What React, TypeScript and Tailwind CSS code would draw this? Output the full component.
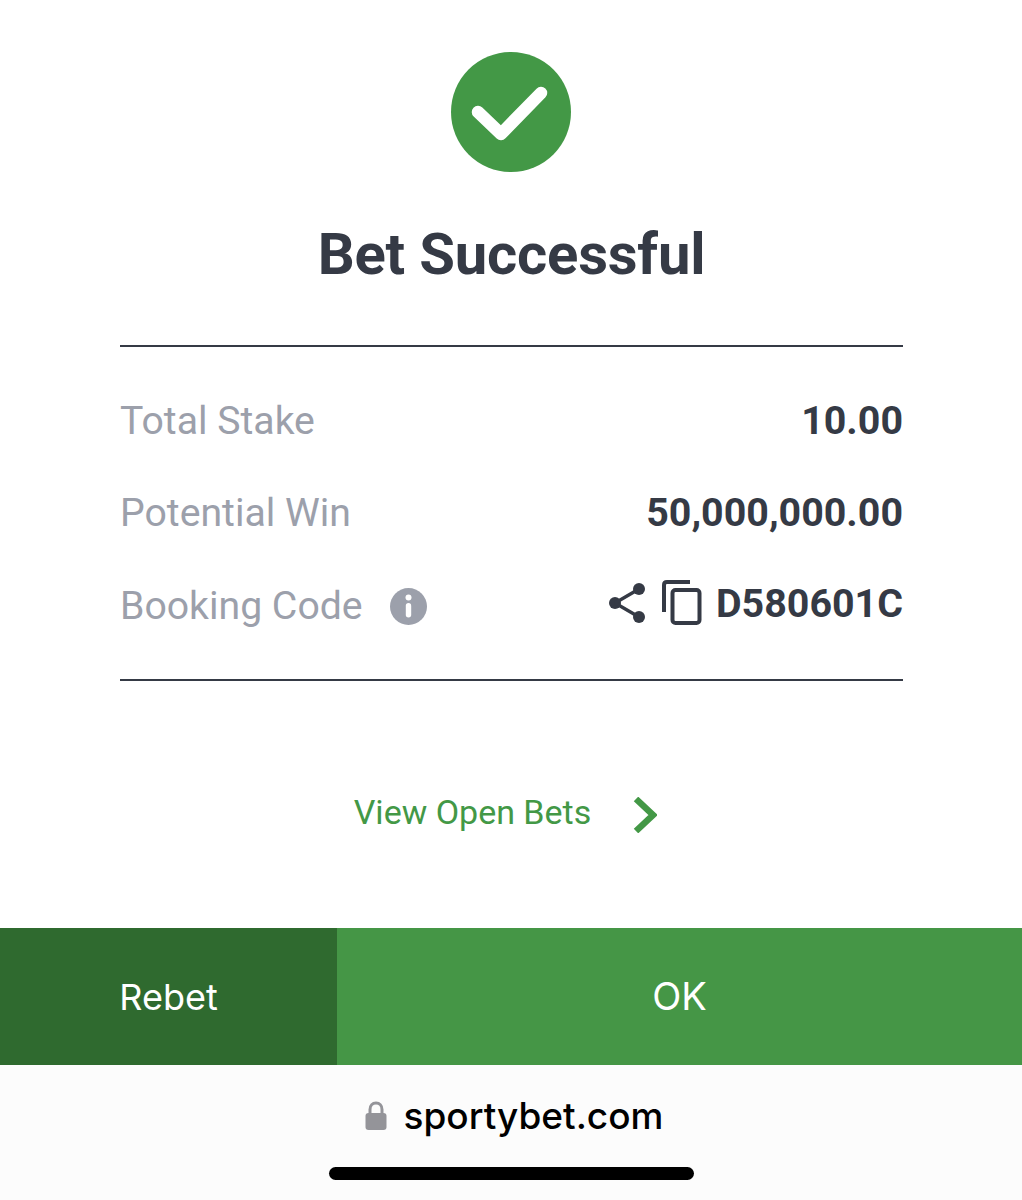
export default function App() {
  return (
    <div className="w-[1022px] h-[1200px] bg-white flex flex-col font-['Roboto',sans-serif]">
      <div className="h-[928px] pl-[120px] pr-[119px] flex flex-col">
        <div className="pt-[52px] flex justify-center">
          <svg width="121" height="121" viewBox="0 0 121 121">
            <circle cx="60" cy="60" r="60" fill="#439846" />
            <path d="M27 60 L50 82 L90 41" fill="none" stroke="#fff" strokeWidth="12.5" strokeLinecap="round" strokeLinejoin="round" />
          </svg>
        </div>
        <h1 className="mt-[49px] text-center text-[58px] leading-[64px] font-bold text-[#353a45] tracking-[-0.2px]">Bet Successful</h1>
        <div className="mt-[59px] h-[2px] bg-[#353a45]" />
        <div className="h-[332px] flex flex-col">
          <div className="mt-[50px] flex items-center justify-between h-[48px]">
            <span className="text-[39.2px] text-[#9ca0ab]">Total Stake</span>
            <span className="text-[39.4px] font-bold text-[#353a45]">10.00</span>
          </div>
          <div className="mt-[44px] flex items-center justify-between h-[48px]">
            <span className="text-[39.2px] text-[#9ca0ab]">Potential Win</span>
            <span className="text-[39.4px] font-bold text-[#353a45]">50,000,000.00</span>
          </div>
          <div className="mt-[45px] flex items-center justify-between h-[48px]">
            <div className="flex items-center gap-[27px]">
              <span className="text-[39.2px] text-[#9ca0ab]">Booking Code</span>
              <svg width="37" height="37" viewBox="0 0 37 37">
                <circle cx="18.5" cy="18.5" r="18.5" fill="#9ca0ab" />
                <circle cx="18.5" cy="9.5" r="3" fill="#fff" />
                <rect x="15.8" y="15" width="5.4" height="14.5" rx="2.7" fill="#fff" />
              </svg>
            </div>
            <div className="flex items-center -mt-[4px]">
              <svg width="38" height="40" viewBox="0 0 38 40" className="text-[#353a45] -mt-[3px]">
                <circle cx="7" cy="20" r="6" fill="currentColor" />
                <circle cx="31" cy="6" r="6" fill="currentColor" />
                <circle cx="31" cy="34" r="6" fill="currentColor" />
                <path d="M7 20 L31 6 M7 20 L31 34" stroke="currentColor" strokeWidth="3.4" />
              </svg>
              <svg width="40" height="46" viewBox="0 0 40 46" fill="none" stroke="#353a45" strokeWidth="4" className="ml-[16px] -mt-[2px]">
                <path d="M2 32 V5 Q2 2 5 2 H28" />
                <rect x="10.5" y="10" width="27" height="33" rx="3" />
              </svg>
              <span className="ml-[14px] text-[39.4px] font-bold text-[#353a45]">D580601C</span>
            </div>
          </div>
        </div>
        <div className="h-[2px] bg-[#353a45]" />
        <div className="mt-[106px] flex justify-center items-center pr-[12px]">
          <span className="text-[34px] text-[#439846]">View Open Bets</span>
          <svg width="24" height="36" viewBox="0 0 24 36" className="ml-[42px] mt-[5px]">
            <path d="M3 2 L20 18 L3 34" fill="none" stroke="#439846" strokeWidth="6.5" />
          </svg>
        </div>
      </div>
      <div className="h-[137px] flex text-white text-[38px] font-['Inter',sans-serif]">
        <div className="w-[337px] bg-[#2f6a2f] flex items-center justify-center text-[36px]">Rebet</div>
        <div className="flex-1 bg-[#459646] flex items-center justify-center">OK</div>
      </div>
      <div className="flex-1 bg-[#fcfcfc] flex flex-col items-center">
        <div className="mt-[29px] ml-[6px] flex items-center gap-[17px]">
          <svg width="22" height="30" viewBox="0 0 22 30">
            <path d="M5 14 V8.5 C5 4.5 7.5 2 11 2 C14.5 2 17 4.5 17 8.5 V14" fill="none" stroke="#949499" strokeWidth="3" />
            <rect x="0.5" y="12" width="21" height="17" rx="3" fill="#949499" />
          </svg>
          <span className="text-[37px] leading-[44px] font-medium text-black font-['Inter',sans-serif]">sportybet.com</span>
        </div>
        <div className="mt-[29px] w-[365px] h-[13px] rounded-full bg-black" />
      </div>
    </div>
  )
}
